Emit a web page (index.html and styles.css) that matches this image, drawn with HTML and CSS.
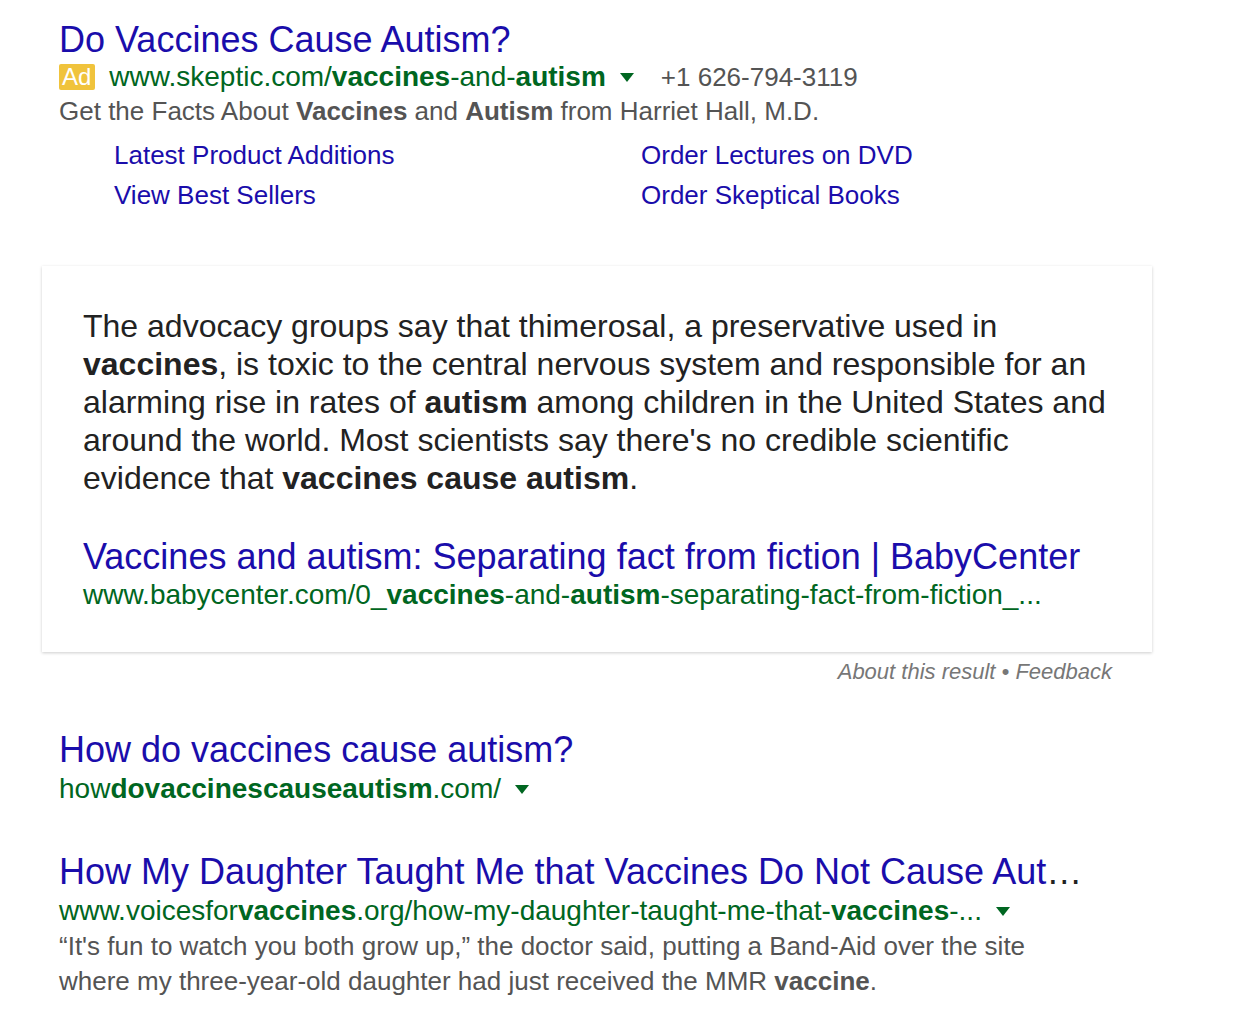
FILE: index.html
```html
<!DOCTYPE html>
<html>
<head>
<meta charset="utf-8">
<link rel="stylesheet" href="styles.css">
</head>
<body>
<div class="page">
  <div class="ad">
    <a class="title">Do Vaccines Cause Autism?</a>
    <div class="urlline">
      <span class="badge">Ad</span>
      <span class="url">www.skeptic.com/<b>vaccines</b>-and-<b>autism</b></span>
      <span class="caret"></span>
      <span class="phone">+1 626-794-3119</span>
    </div>
    <div class="desc">Get the Facts About <b>Vaccines</b> and <b>Autism</b> from Harriet Hall, M.D.</div>
    <div class="sitelinks">
      <a>Latest Product Additions</a>
      <a>Order Lectures on DVD</a>
      <a>View Best Sellers</a>
      <a>Order Skeptical Books</a>
    </div>
  </div>

  <div class="card">
    <p class="answer">The advocacy groups say that thimerosal, a preservative used in <b>vaccines</b>, is toxic to the central nervous system and responsible for an alarming rise in rates of <b>autism</b> among children in the United States and around the world. Most scientists say there's no credible scientific evidence that <b>vaccines cause autism</b>.</p>
    <a class="cardlink">Vaccines and autism: Separating fact from fiction | BabyCenter</a>
    <div class="url cardurl">www.babycenter.com/0_<b>vaccines</b>-and-<b>autism</b>-separating-fact-from-fiction_...</div>
  </div>
  <div class="about">About this result • Feedback</div>

  <div class="result r1">
    <a class="title">How do vaccines cause autism?</a>
    <div class="urlline">
      <span class="url">how<b>dovaccinescauseautism</b>.com/</span>
      <span class="caret"></span>
    </div>
  </div>

  <div class="result r2">
    <a class="title trunc">How My Daughter Taught Me that Vaccines Do Not Cause Aut<span class="ell">…</span></a>
    <div class="urlline">
      <span class="url">www.voicesfor<b>vaccines</b>.org/how-my-daughter-taught-me-that-<b>vaccines</b>-...</span>
      <span class="caret"></span>
    </div>
    <div class="desc">“It's fun to watch you both grow up,” the doctor said, putting a Band-Aid over the site<br>where my three-year-old daughter had just received the MMR <b>vaccine</b>.</div>
  </div>
</div>
</body>
</html>
```

FILE: styles.css
```css
html, body {
  margin: 0;
  padding: 0;
  background: #fff;
}
body {
  font-family: "Liberation Sans", Arial, sans-serif;
  width: 1248px;
}
.page {
  padding: 19px 0 0 0;
}
a { cursor: pointer; }
.ad, .result {
  padding-left: 59px;
}
.title {
  display: block;
  font-size: 36px;
  line-height: 42px;
  color: #1a0dab;
  white-space: nowrap;
}
.urlline {
  display: flex;
  align-items: center;
  height: 32px;
  white-space: nowrap;
}
.result .urlline {
  margin-top: 2px;
}
.badge {
  display: inline-block;
  background: #f0c33c;
  color: #fff;
  font-size: 24px;
  line-height: 26px;
  height: 26px;
  padding: 0 4px 0 3px;
  border-radius: 2px;
  margin-right: 14px;
}
.url {
  color: #006621;
  font-size: 28px;
  line-height: 32px;
}
.url b { font-weight: bold; }
.caret {
  display: inline-block;
  width: 0;
  height: 0;
  border-left: 7px solid transparent;
  border-right: 7px solid transparent;
  border-top: 9px solid #006621;
  margin-left: 14px;
}
.phone {
  color: #545454;
  font-size: 26px;
  margin-left: 27px;
}
.desc {
  color: #545454;
  font-size: 26px;
  line-height: 35px;
  margin-top: 2px;
}
.ad .desc {
  margin-top: 1px;
}
.desc b { color: #545454; }
.sitelinks {
  display: grid;
  grid-template-columns: 527px auto;
  padding-left: 55px;
  margin-top: 6px;
}
.sitelinks a {
  color: #1a0dab;
  font-size: 26px;
  line-height: 40px;
}
.card {
  margin: 51px 0 0 42px;
  width: 1110px;
  box-sizing: border-box;
  padding: 41px 38px 41px 41px;
  background: #fff;
  box-shadow: 0 1px 3px rgba(0,0,0,0.2);
}
.answer {
  margin: 0;
  color: #222;
  font-size: 32px;
  line-height: 38px;
}
.answer b { color: #222; }
.cardlink {
  display: block;
  margin-top: 39px;
  color: #1a0dab;
  font-size: 36px;
  line-height: 42px;
  white-space: nowrap;
}
.cardurl {
  white-space: nowrap;
  margin-top: 1px;
}
.about {
  width: 1112px;
  text-align: right;
  color: #777;
  font-style: italic;
  font-size: 22px;
  line-height: 40px;
}
.r1 { margin-top: 37px; }
.r2 { margin-top: 46px; }
.trunc .ell { color: #222; }
```
